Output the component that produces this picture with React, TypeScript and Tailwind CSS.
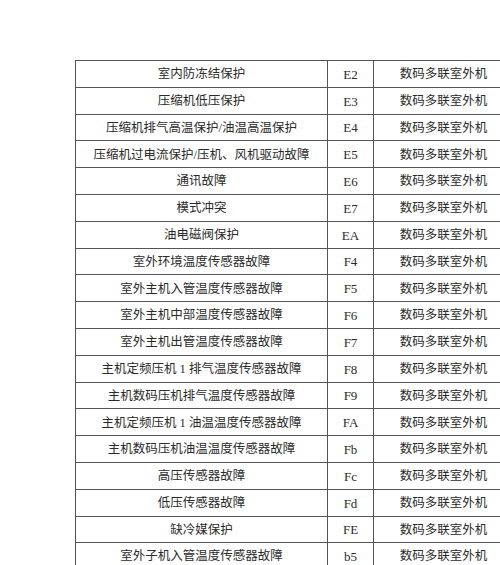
import React from "react";

const rows: [string, string][] = [
  ["室内防冻结保护", "E2"],
  ["压缩机低压保护", "E3"],
  ["压缩机排气高温保护/油温高温保护", "E4"],
  ["压缩机过电流保护/压机、风机驱动故障", "E5"],
  ["通讯故障", "E6"],
  ["模式冲突", "E7"],
  ["油电磁阀保护", "EA"],
  ["室外环境温度传感器故障", "F4"],
  ["室外主机入管温度传感器故障", "F5"],
  ["室外主机中部温度传感器故障", "F6"],
  ["室外主机出管温度传感器故障", "F7"],
  ["主机定频压机 1 排气温度传感器故障", "F8"],
  ["主机数码压机排气温度传感器故障", "F9"],
  ["主机定频压机 1 油温温度传感器故障", "FA"],
  ["主机数码压机油温温度传感器故障", "Fb"],
  ["高压传感器故障", "Fc"],
  ["低压传感器故障", "Fd"],
  ["缺冷媒保护", "FE"],
  ["室外子机入管温度传感器故障", "b5"],
];

const cjk = "font-['Liberation_Serif','Noto_Sans_CJK_SC',serif]";

export default function App() {
  return (
    <div className="w-[500px] h-[565px] overflow-hidden bg-white">
      <table
        className={`ml-[75px] mt-[60px] w-[438px] table-fixed border-collapse text-[#2a2a2a] ${cjk}`}
      >
        <colgroup>
          <col className="w-[252px]" />
          <col className="w-[46px]" />
          <col className="w-[140px]" />
        </colgroup>
        <tbody>
          {rows.map(([name, code]) => (
            <tr key={code} className="h-[26.8px]">
              <td className="border border-[#555] p-0 pt-px text-center text-[12.5px] leading-none whitespace-nowrap">
                {name}
              </td>
              <td className="border border-[#555] p-0 pt-px text-center text-[13px] leading-none">
                {code}
              </td>
              <td className="border border-[#555] p-0 pt-px text-center text-[12.5px] leading-none whitespace-nowrap">
                数码多联室外机
              </td>
            </tr>
          ))}
        </tbody>
      </table>
    </div>
  );
}
